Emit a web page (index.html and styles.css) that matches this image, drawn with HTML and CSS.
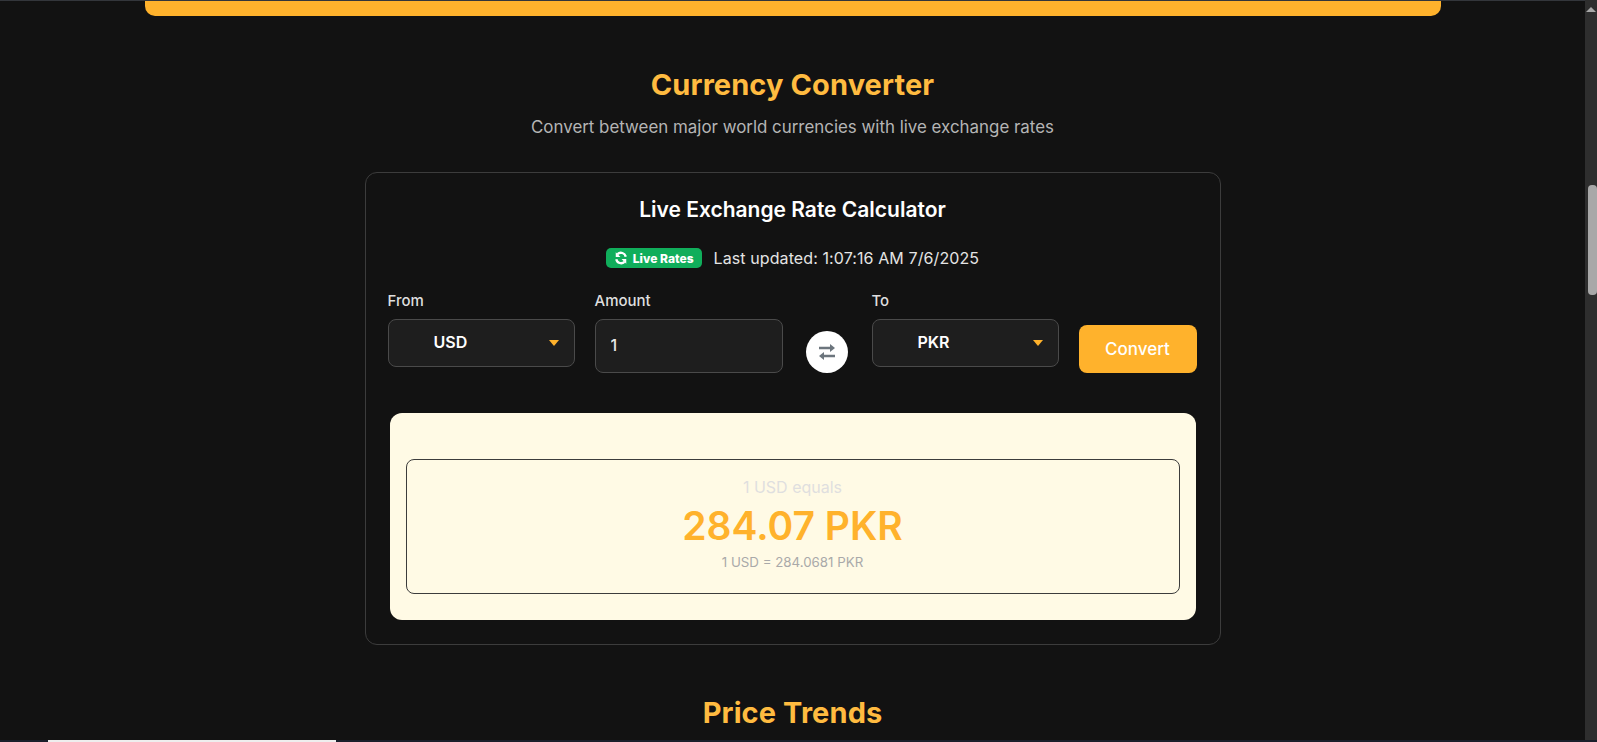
FILE: index.html
```html
<!DOCTYPE html>
<html>

<head>
    <title>Currency Converter</title>
    <link rel="stylesheet" href="styles.css">
</head>

<body>
    <div class="window">
        <main class="page">
            <div class="top-banner"></div>

            <section class="converter">
                <h2 class="section-title">Currency Converter</h2>
                <p class="section-sub">Convert between major world currencies with live exchange rates</p>

                <div class="card">
                    <h3 class="card-title">Live Exchange Rate Calculator</h3>

                    <div class="status">
                        <span class="badge">
                            <svg class="badge-icon" viewBox="0 0 16 16">
                                <path d="M13.4 6.6A5.6 5.6 0 0 0 4 3.6" />
                                <path d="M2.6 9.4A5.6 5.6 0 0 0 12 12.4" />
                                <path class="solid" d="M2 1.4v5.4h5.4zM14 14.6V9.2H8.6z" />
                            </svg>
                            Live Rates
                        </span>
                        <span class="updated">Last updated: 1:07:16 AM 7/6/2025</span>
                    </div>

                    <div class="form-row">
                        <div class="field field-select">
                            <label class="field-label">From</label>
                            <div class="select"><span>USD</span><i class="caret"></i></div>
                        </div>
                        <div class="field field-amount">
                            <label class="field-label">Amount</label>
                            <input class="amount" type="text" value="1">
                        </div>
                        <button class="swap" type="button">
                            <svg viewBox="0 0 16 16">
                                <path d="M0 2.85h11V0l5 4-5 4V5.15H0z" />
                                <path d="M16 10.85H5V8l-5 4 5 4v-2.85h11z" />
                            </svg>
                        </button>
                        <div class="field field-select">
                            <label class="field-label">To</label>
                            <div class="select"><span>PKR</span><i class="caret"></i></div>
                        </div>
                        <button class="convert" type="button">Convert</button>
                    </div>

                    <div class="result">
                        <div class="result-inner">
                            <div class="result-label">1 USD equals</div>
                            <div class="result-value">284.07 PKR</div>
                            <div class="result-rate">1 USD = 284.0681 PKR</div>
                        </div>
                    </div>
                </div>
            </section>

            <h2 class="section-title trends-title">Price Trends</h2>
        </main>

        <div class="scrollbar">
            <i class="scroll-up"></i>
            <i class="scroll-thumb"></i>
        </div>
    </div>

    <div class="bottom-strip"><i class="bottom-thumb"></i></div>
</body>

</html>
```

FILE: styles.css
```css
html,
body {
    height: 100%;
    margin: 0;
    overflow: hidden;
}

body {
    background-color: #121212;
    color: #fff;
    display: flex;
    flex-direction: column;
    font-family: Inter, "Liberation Sans", sans-serif;
}

.window {
    display: flex;
    flex: 1;
    min-height: 0;
}

.page {
    border-top: 1px solid #33363b;
    flex: 1;
    overflow: hidden;
    text-align: center;
}

.top-banner {
    background-color: #ffb22c;
    border-radius: 0 0 10px 10px;
    height: 15px;
    margin: 0 144px 0 145px;
}

.converter {
    margin-top: 53px;
}

.section-title {
    color: #ffbb40;
    font-size: 29px;
    font-weight: 700;
    letter-spacing: 0.1px;
    line-height: 32px;
    margin: 0;
}

.section-sub {
    color: #b5b5b5;
    font-size: 16.9px;
    line-height: 24px;
    margin: 14px 0 0;
}

.card {
    border: 1px solid #3c3c3c;
    border-radius: 12px;
    box-sizing: border-box;
    height: 473px;
    margin: 33px auto 0;
    padding: 23px 22px 0;
    width: 856px;
}

.card-title {
    font-size: 21px;
    font-weight: 600;
    line-height: 28px;
    margin: 0;
}

.status {
    align-items: center;
    display: flex;
    gap: 12px;
    height: 24px;
    justify-content: center;
    margin-top: 22px;
}

.badge {
    align-items: center;
    background-color: #10ae5b;
    border-radius: 5px;
    display: flex;
    font-size: 12px;
    font-weight: 800;
    gap: 5px;
    height: 20px;
    padding: 0 8px;
}

.badge-icon {
    fill: none;
    height: 14px;
    stroke: #fff;
    stroke-width: 2.6;
    width: 14px;
}

.badge-icon .solid {
    fill: #fff;
    stroke: none;
}

.updated {
    color: #e4e4e4;
    font-size: 16px;
    letter-spacing: 0.1px;
}

.form-row {
    align-items: flex-end;
    display: flex;
    margin-top: 21px;
}

.field {
    text-align: left;
}

.field-select {
    margin-bottom: 6px;
    width: 187px;
}

.field-amount {
    margin-left: 20px;
    width: 188px;
}

.field-label {
    color: #dedede;
    display: block;
    font-size: 15px;
    font-weight: 500;
    line-height: 20px;
    margin-bottom: 8px;
}

.select {
    align-items: center;
    background-color: #1e1e1e;
    border: 1px solid #4a4a4a;
    border-radius: 8px;
    box-sizing: border-box;
    display: flex;
    font-size: 16px;
    font-weight: 600;
    height: 48px;
    justify-content: space-between;
    padding: 0 15px 2px 45px;
}

.caret {
    border-left: 5px solid transparent;
    border-right: 5px solid transparent;
    border-top: 6px solid #ffb22c;
    height: 0;
    margin-top: 2px;
    width: 0;
}

.amount {
    background-color: #1e1e1e;
    border: 1px solid #4a4a4a;
    border-radius: 8px;
    box-sizing: border-box;
    color: #e8e8e8;
    display: block;
    font-family: inherit;
    font-size: 16px;
    font-weight: 500;
    height: 54px;
    padding: 0 15px 2px;
    width: 100%;
}

.swap {
    align-items: center;
    background-color: #fff;
    border: none;
    border-radius: 50%;
    display: flex;
    height: 42px;
    justify-content: center;
    margin: 0 24px 0 23px;
    padding: 0;
    width: 42px;
}

.swap svg {
    fill: #6c757d;
    height: 16px;
    width: 16px;
}

.convert {
    background-color: #ffb22c;
    border: none;
    border-radius: 8px;
    color: #fff;
    font-family: inherit;
    font-size: 17px;
    font-weight: 500;
    height: 48px;
    margin-left: 20px;
    padding: 0;
    width: 118px;
}

.result {
    background-color: #fffae5;
    border-radius: 12px;
    box-sizing: border-box;
    height: 207px;
    margin: 40px 2px 0;
    padding: 46px 16px 0;
}

.result-inner {
    border: 1px solid #3c3c3c;
    border-radius: 8px;
    box-sizing: border-box;
    height: 135px;
    padding-top: 16px;
}

.result-label {
    color: #dfdfdf;
    font-size: 16px;
    line-height: 22px;
    margin-bottom: 1px;
}

.result-value {
    color: #ffb22c;
    font-size: 39px;
    font-weight: 600;
    line-height: 54px;
}

.result-rate {
    color: #a9a9a9;
    font-size: 13.3px;
    line-height: 18px;
}

.trends-title {
    margin-top: 52px;
}

.scrollbar {
    background-color: #2e2e2e;
    display: flex;
    flex-direction: column;
    width: 12px;
}

.scroll-up {
    align-self: center;
    border-bottom: 5px solid #a8a8a8;
    border-left: 5px solid transparent;
    border-right: 5px solid transparent;
    height: 0;
    margin-top: 7px;
    width: 0;
}

.scroll-thumb {
    align-self: flex-end;
    background-color: #a8a8a8;
    border-radius: 4px;
    height: 110px;
    margin-top: 173px;
    width: 9px;
}

.bottom-strip {
    background-color: #1a1f2b;
    height: 2px;
    padding-left: 48px;
}

.bottom-thumb {
    background-color: #eee;
    display: block;
    height: 2px;
    width: 288px;
}
```
